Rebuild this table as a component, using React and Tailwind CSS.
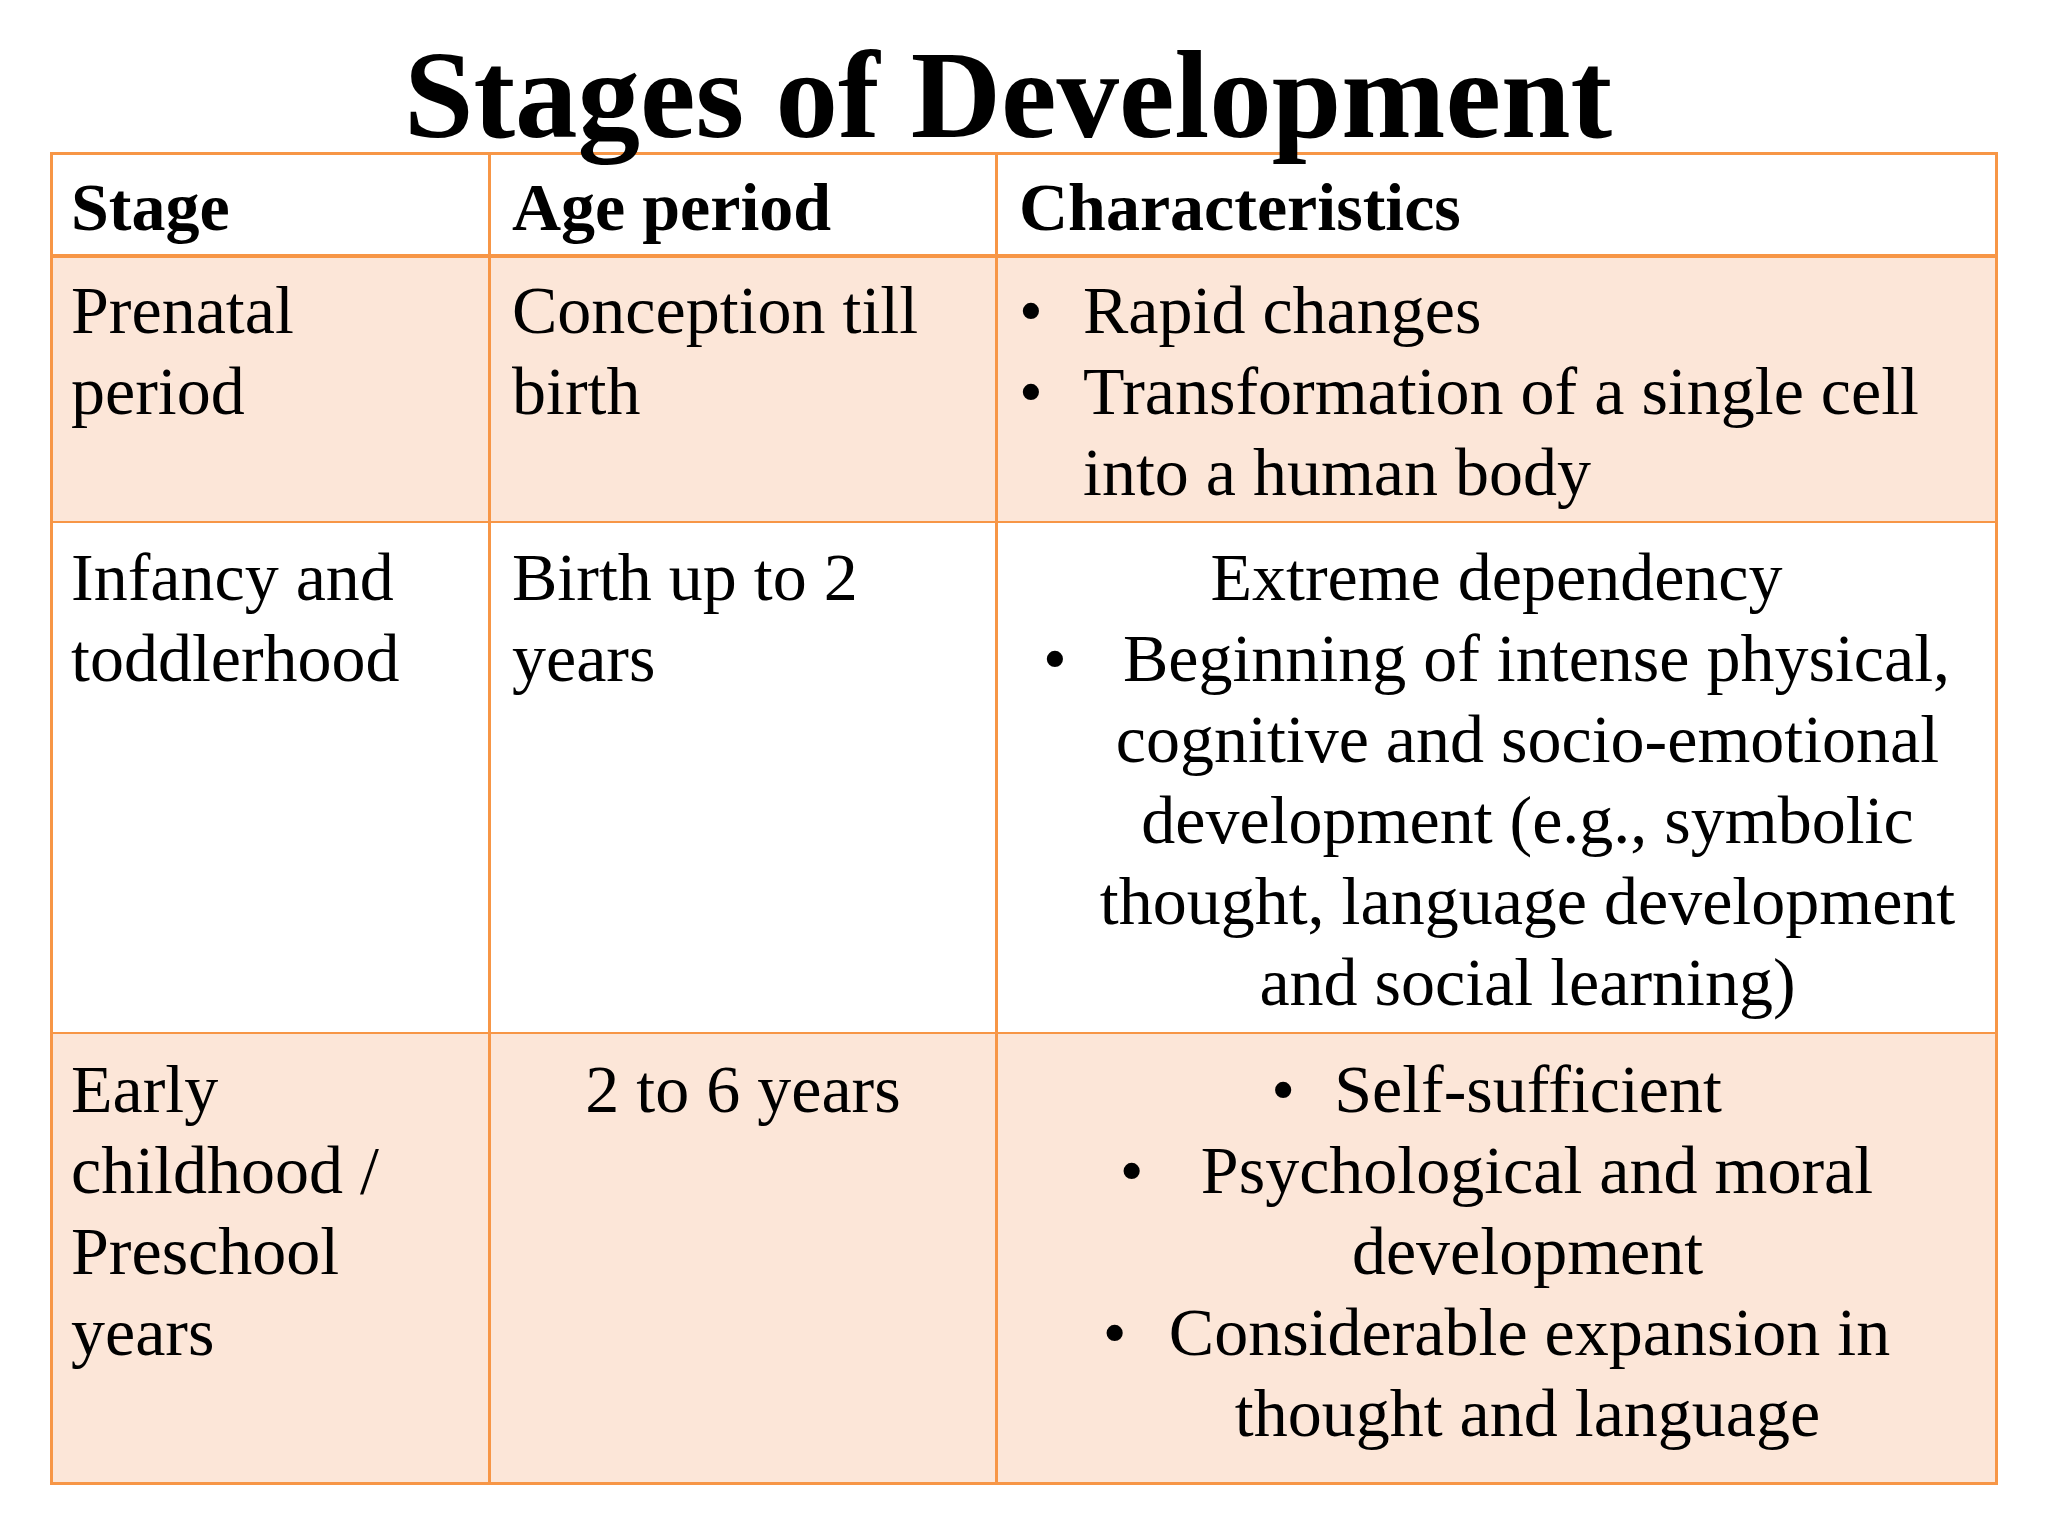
import React from 'react';

const B = 'border-[#f79646]';

const Bullet = ({ w }) => (
    <span className="inline-block text-left" style={{ width: w }}>•</span>
);

const App = () => {
    return (
        <div className="min-h-screen w-full bg-white text-black font-['Liberation_Serif','Times_New_Roman',serif]">
            {/* slide title */}
            <div className="h-[152px] pt-[33px] pr-[32px] text-center text-[125px] leading-[125px] font-bold whitespace-nowrap">
                Stages of Development
            </div>

            <div className={`ml-[50px] w-[1948px] border-[3px] ${B} text-[68px] leading-[81px]`}>
                {/* header */}
                <div className={`flex h-[103px] border-b-4 ${B} bg-white font-bold`}>
                    <div className={`w-[438px] border-r-[3px] ${B} pl-[18px] pr-[21px] pt-[12px]`}>Stage</div>
                    <div className={`w-[507px] border-r-[3px] ${B} px-[21px] pt-[12px]`}>Age period</div>
                    <div className="flex-1 px-[21px] pt-[12px]">Characteristics</div>
                </div>

                {/* prenatal */}
                <div className={`flex h-[265px] border-b-2 ${B} bg-[#fce6d8]`}>
                    <div className={`w-[438px] border-r-[3px] ${B} pl-[18px] pr-[21px] pt-[12px]`}>
                        Prenatal<br />period
                    </div>
                    <div className={`w-[507px] border-r-[3px] ${B} px-[21px] pt-[12px]`}>
                        Conception till<br />birth
                    </div>
                    <div className="flex-1 px-[21px] pt-[12px] whitespace-nowrap">
                        <div className="flex">
                            <span className="w-[64px] shrink-0">•</span>
                            <span>Rapid changes</span>
                        </div>
                        <div className="flex">
                            <span className="w-[64px] shrink-0">•</span>
                            <span>
                                Transformation of a single cell<br />into a human body
                            </span>
                        </div>
                    </div>
                </div>

                {/* infancy */}
                <div className={`flex h-[511px] border-b-2 ${B} bg-white`}>
                    <div className={`w-[438px] border-r-[3px] ${B} pl-[18px] pr-[21px] pt-[14px]`}>
                        Infancy and<br />toddlerhood
                    </div>
                    <div className={`w-[507px] border-r-[3px] ${B} px-[21px] pt-[14px]`}>
                        Birth up to 2<br />years
                    </div>
                    <div className="flex-1 px-[21px] pt-[14px] text-center whitespace-nowrap">
                        <div>Extreme dependency</div>
                        <div>
                            <Bullet w={80} />Beginning of intense physical,
                        </div>
                        <div className="pl-[62px]">
                            cognitive and socio-emotional<br />
                            development (e.g., symbolic<br />
                            thought, language development<br />
                            and social learning)
                        </div>
                    </div>
                </div>

                {/* early childhood */}
                <div className="flex h-[448px] bg-[#fce6d8]">
                    <div className={`w-[438px] border-r-[3px] ${B} pl-[18px] pr-[21px] pt-[15px]`}>
                        Early<br />childhood /<br />Preschool<br />years
                    </div>
                    <div className={`w-[507px] border-r-[3px] ${B} px-[21px] pt-[15px] text-center`}>
                        2 to 6 years
                    </div>
                    <div className="flex-1 px-[21px] pt-[15px] text-center whitespace-nowrap">
                        <div>
                            <Bullet w={63} />Self-sufficient
                        </div>
                        <div>
                            <Bullet w={81} />Psychological and moral
                        </div>
                        <div className="pl-[62px]">development</div>
                        <div>
                            <Bullet w={66} />Considerable expansion in
                        </div>
                        <div className="pl-[62px]">thought and language</div>
                    </div>
                </div>
            </div>
        </div>
    );
};

export default App;
